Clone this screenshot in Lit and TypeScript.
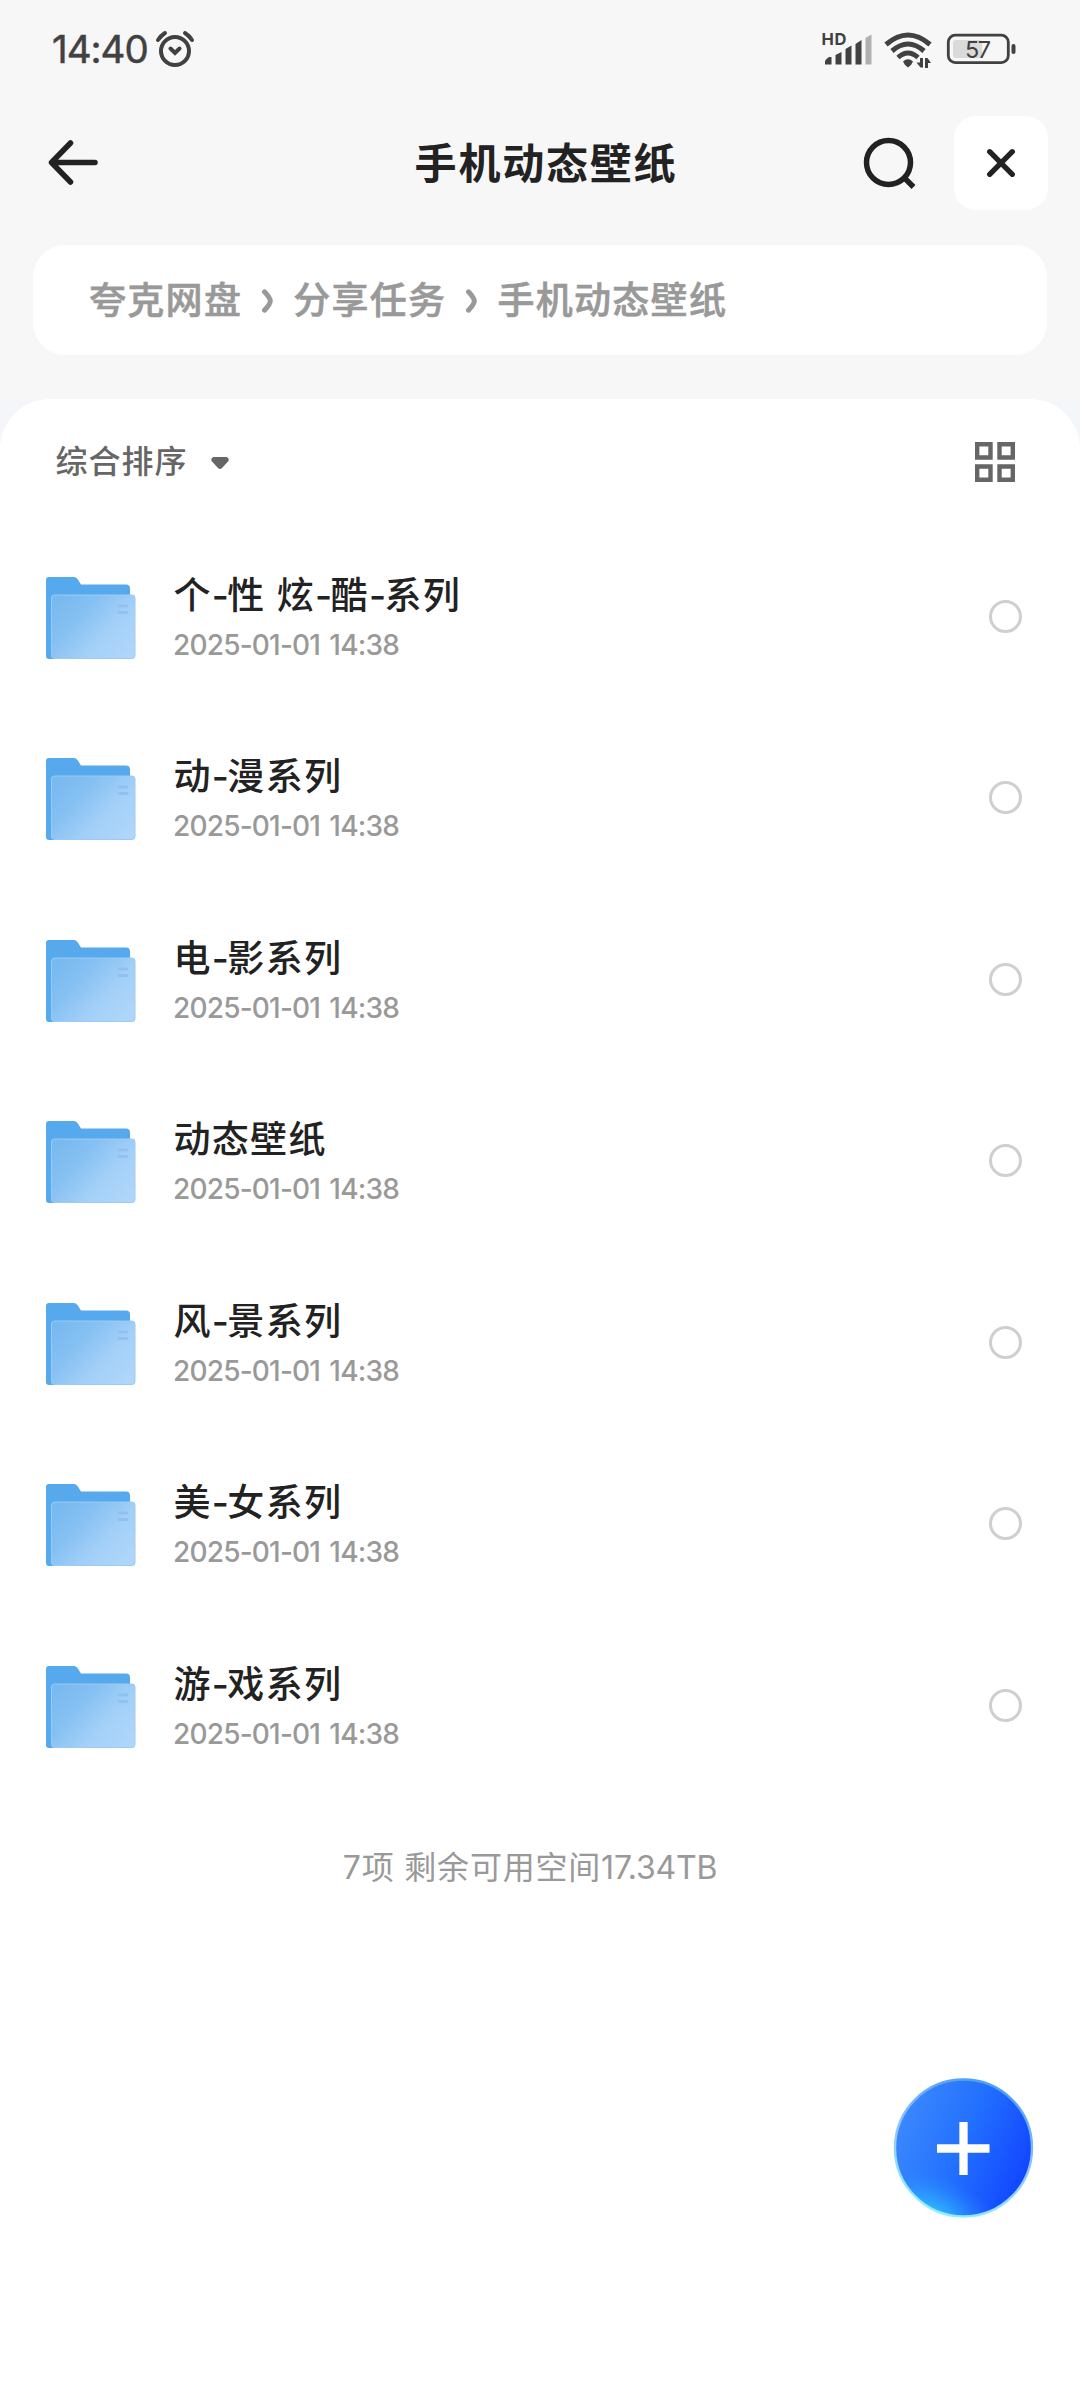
import { LitElement, html, css, svg } from "lit";
import { customElement, property } from "lit/decorators.js";

@customElement("folder-row")
class FolderRow extends LitElement {
  @property() name = "";
  @property() time = "";

  static styles = css`
    :host { display: flex; height: 181.47px; box-sizing: border-box; padding: 0 58px 0 45px; align-items: flex-start; }
    .folder { width: 92px; height: 84px; margin-top: 50.300px; flex: none; }
    .text { flex: 1; margin-left: 36.500px; padding-top: 44px; }
    .name { font-size: 37px; line-height: 52px; font-weight: 500; letter-spacing: 1.3px; color: #222; white-space: pre; }
    .dash { letter-spacing: -1.6px; }
    .time { font-size: 28px; line-height: 40px; margin: 3px 0 0 -0.5px; letter-spacing: -0.8px; word-spacing: 2.500px; font-weight: 500; color: #999; white-space: pre; }
    .check { width: 33px; height: 33px; box-sizing: border-box; border: 3px solid #cfcfd1; border-radius: 50%; margin-top: 74.300px; }
  `;

  render() {
    const parts = this.name.split(/(-)/);
    return html`
      <svg class="folder" viewBox="0 0 92 84">
        <defs>
          <linearGradient id="front" x1="0" y1="0.15" x2="1" y2="0.85">
            <stop offset="0" stop-color="#78b9ef" />
            <stop offset="0.3" stop-color="#85c0f2" />
            <stop offset="0.65" stop-color="#a3d0f8" />
            <stop offset="1" stop-color="#b0d6fa" />
          </linearGradient>
        </defs>
        <path d="M1 4Q1 1 4 1H29Q31 1 32.500 3L36 8.500H81Q85 8.500 85 12.500V50L20 83H4Q1 83 1 80Z" fill="#56a9ec" />
        <rect x="6.500" y="19" width="83.500" height="63.500" rx="3" fill="url(#front)" stroke="#9bcbf4" stroke-width="1" />
        <path d="M74 30H82M74 36.500H82" stroke="#90c1f0" stroke-width="2.800" stroke-linecap="round" />
      </svg>
      <div class="text">
        <div class="name">${parts.map((p) => (p === "-" ? html`<span class="dash">-</span>` : p))}</div>
        <div class="time">${this.time}</div>
      </div>
      <span class="check"></span>
    `;
  }
}

const chevron = svg`<path d="M2.500 2.800Q8.300 9 8.300 12Q8.300 15 2.500 21.200" fill="none" stroke="#999" stroke-width="5" stroke-linecap="round" />`;

@customElement("app-root")
class AppRoot extends LitElement {
  private folders = ["个-性 炫-酷-系列", "动-漫系列", "电-影系列", "动态壁纸", "风-景系列", "美-女系列", "游-戏系列"];

  static styles = css`
    :host { display: block; width: 1080px; height: 2400px; background: #f7f7f7; overflow: hidden; position: relative;
      font-family: Inter, "Noto Sans CJK SC", sans-serif; }
    svg { display: block; flex: none; }
    .status { height: 98px; box-sizing: border-box; padding: 0 64px 0 52px; display: flex; align-items: center; color: #414141; }
    .clock { font-size: 38.500px; letter-spacing: -1px; line-height: 46px; flex: 1; display: flex; gap: 7px; align-items: center; -webkit-text-stroke: 0.5px #414141; }
    .header { height: 146.700px; box-sizing: border-box; padding: 17.500px 32.500px 0 48px; display: flex; align-items: flex-start; }
    .back { margin-top: 21.500px; }
    .title { flex: 1; text-align: center; font-size: 42px; line-height: 60px; margin: 18px 0 0 129px; font-weight: 700; letter-spacing: 1.8px; color: #222; }
    .search { margin-top: 19.500px; }
    .close { width: 94px; height: 94px; border-radius: 22px; background: #fff; margin-left: 36.500px; display: grid; place-items: center; }
    .crumbs { height: 110px; margin: 0 33px; background: #fff; border-radius: 32px; box-sizing: border-box; padding: 2px 0 0 56px;
      display: flex; align-items: center; font-size: 37px; letter-spacing: 1.3px; line-height: 54px; font-weight: 500; color: #999;
      -webkit-text-stroke: 0.6px #999; }
    .crumbs svg { margin: 0 20.500px 0 19.500px; }
    .backing { background: #f4f6f9; margin-top: 44px; }
    .sheet { background: #fff; border-radius: 50px 50px 0 0; height: 2002px; }
    .sort { height: 127px; box-sizing: border-box; padding: 0 65px 0 55.500px; display: flex; align-items: center; color: #666; }
    .label { font-size: 32px; letter-spacing: 1px; line-height: 46px; font-weight: 500; margin-top: -1px; }
    .arrow { margin: 2px 0 0 22px; flex: none; }
    .spacer { flex: 1; }
    .footer { margin: 49px 0 0 -20px; font-size: 32px; line-height: 46px; letter-spacing: 0.8px; text-align: center; color: #999; white-space: pre; }
    .latin { letter-spacing: -0.2px; }
    .fab { position: absolute; left: 892px; top: 2076px; }
    .battery { margin-left: 14px; }
    .wifi { margin: 1px 0 0 11px; }
    .svgtext { font-family: Inter, sans-serif; fill: #414141; }
  `;

  render() {
    return html`
      <div class="status">
        <div class="clock"><span>14:40</span>
          <svg width="40" height="38" viewBox="0 0 40 38" fill="none" stroke="#414141" stroke-width="4" stroke-linecap="round">
            <circle cx="20" cy="21" r="14" />
            <path d="M3 10Q6 5.500 10 3M30 3Q34 5.500 37 10M15.500 18.500L20 23L24.500 18.500" />
          </svg>
        </div>
        <svg width="52" height="38" viewBox="0 0 52 38">
          <text class="svgtext" x="0.500" y="15" font-size="16.500" font-weight="700" textLength="25">HD</text>
          <path fill="#414141" d="M4 34.500V31.500Q4 30 5.500 29L8 27H10.500V34.500ZM14.500 34.500V25L20.500 22V34.500ZM24.500 34.500V19L30.500 15.500V34.500ZM34.500 34.500V14L40.500 10V34.500Z" />
          <path fill="#b0b0b0" d="M44.500 34.500V8L50.500 4.500V34.500Z" />
        </svg>
        <svg class="wifi" width="48" height="38" viewBox="0 0 48 38">
          <g fill="none" stroke="#414141" stroke-width="5">
            <path d="M2 13.500Q24 -5.500 46 13.500" /><path d="M8 20Q24 6 40 20" /><path d="M14 26.500Q24 17.500 34 26.500" />
          </g>
          <path d="M19 30.500Q24 26 29 30.500Q28 33.500 24 36.500Q20 33.500 19 30.500Z" fill="#414141" />
          <path d="M39 27V36.500H36.500L32.500 31.500H36V27ZM41 37V27H43.500L47 32H44V37Z" fill="#414141" />
        </svg>
        <svg class="battery" width="70" height="32" viewBox="0 0 70 32">
          <rect x="2.300" y="2.100" width="60" height="27.500" rx="7" fill="none" stroke="#414141" stroke-width="2.800" />
          <rect x="7" y="7" width="29" height="18" rx="3" fill="#dadada" />
          <path d="M67.500 13V19" stroke="#414141" stroke-width="4" stroke-linecap="round" />
          <text class="svgtext" x="19" y="24.500" font-size="23.500" textLength="26">57</text>
        </svg>
      </div>
      <div class="header">
        <svg class="back" width="52" height="50" viewBox="0 0 52 50" fill="none" stroke="#222" stroke-width="5.500" stroke-linecap="round" stroke-linejoin="round">
          <path d="M22.500 6L3.500 25.500L22.500 45M4 25.500H47" />
        </svg>
        <div class="title">手机动态壁纸</div>
        <svg class="search" width="54" height="56" viewBox="0 0 54 56" fill="none" stroke="#222" stroke-width="5.500">
          <circle cx="25.500" cy="27.500" r="22" /><path d="M41.500 43L50.500 52" />
        </svg>
        <div class="close">
          <svg width="30" height="30" viewBox="0 0 30 30" fill="none" stroke="#222" stroke-width="5.300" stroke-linecap="round"><path d="M3.700 3.700L26.300 26.300M26.300 3.700L3.700 26.300" /></svg>
        </div>
      </div>
      <div class="crumbs">
        <span>夸克网盘</span><svg width="11" height="24" viewBox="0 0 11 24">${chevron}</svg>
        <span>分享任务</span><svg width="11" height="24" viewBox="0 0 11 24">${chevron}</svg>
        <span>手机动态壁纸</span>
      </div>
      <div class="backing">
        <div class="sheet">
          <div class="sort">
            <span class="label">综合排序</span>
            <svg class="arrow" width="20" height="14" viewBox="0 0 20 14"><path d="M4 1H16Q19.500 1.500 18.500 5L12 12Q10 14 8 12L1.500 5Q.5 1.500 4 1Z" fill="#666" /></svg>
            <span class="spacer"></span>
            <svg width="40" height="40" viewBox="0 0 40 40" fill="none" stroke="#666" stroke-width="4.400">
              <path d="M2.200 2.200H15.500V15.500H2.200ZM24.500 2.200H37.800V15.500H24.500ZM2.200 24.500H15.500V37.800H2.200ZM24.500 24.500H37.800V37.800H24.500Z" />
            </svg>
          </div>
          ${this.folders.map((n) => html`<folder-row .name=${n} .time=${"2025-01-01 14:38"}></folder-row>`)}
          <div class="footer">7项 剩余可用空间<span class="latin">17.34TB</span></div>
        </div>
      </div>
      <svg class="fab" width="144" height="144" viewBox="0 0 144 144">
        <defs>
          <linearGradient id="blue" x1="0.05" y1="0.3" x2="0.95" y2="0.65">
            <stop offset="0" stop-color="#3b87fd" /><stop offset="0.5" stop-color="#2270fe" /><stop offset="1" stop-color="#1348ff" />
          </linearGradient>
          <radialGradient id="cyan" cx="0.5" cy="0.5" r="0.5" gradientTransform="translate(.27 .99) rotate(24) scale(1.15 .62) translate(-.5 -.5)">
            <stop offset="0" stop-color="#35c8ff" /><stop offset="0.4" stop-color="#2ea8ff" stop-opacity="0.7" /><stop offset="1" stop-color="#2a80ff" stop-opacity="0" />
          </radialGradient>
          <linearGradient id="rim" x1="0.7" y1="0" x2="0.35" y2="1">
            <stop offset="0" stop-color="#4c9df0" /><stop offset="0.5" stop-color="#8fc4ff" /><stop offset="1" stop-color="#8ff0fb" />
          </linearGradient>
        </defs>
        <circle cx="71.500" cy="72" r="69" fill="url(#blue)" />
        <circle cx="71.500" cy="72" r="69" fill="url(#cyan)" />
        <circle cx="71.500" cy="72" r="68.500" fill="none" stroke="url(#rim)" stroke-width="2.400" />
        <path d="M71.500 46V99M45 72.500H97.500" stroke="#fff" stroke-width="8.300" />
      </svg>
    `;
  }
}
